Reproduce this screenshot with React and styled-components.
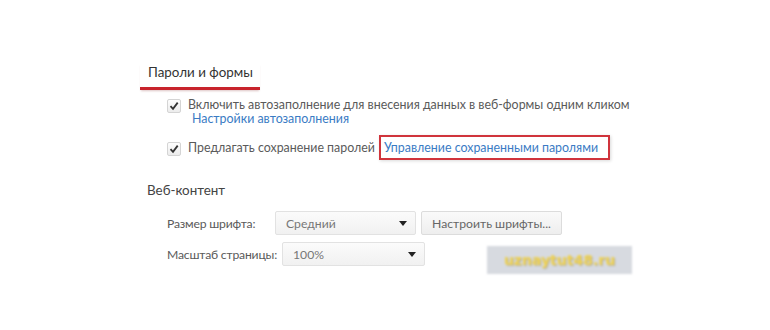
import React from 'react'
import styled, { createGlobalStyle } from 'styled-components'

const GlobalStyle = createGlobalStyle`
  html, body {
    margin: 0;
    background: #fff;
  }
  body {
    font-family: Lato, "Open Sans", "Liberation Sans", sans-serif;
    color: #5a5a5a;
  }
`

const Page = styled.div`
  width: 770px;
  height: 330px;
  box-sizing: border-box;
  padding: 61px 0 0 140px;
  position: relative;
  overflow: hidden;
  white-space: nowrap;
`

const Heading = styled.h3`
  display: inline-block;
  margin: 0;
  padding: 0 7px 6px 8px;
  font-size: 13.4px;
  line-height: 18px;
  font-weight: 400;
  color: #333;
  border-bottom: 3px solid #c8232c;
  box-shadow: 0 2px 2px -1px rgba(120, 20, 20, 0.25);
`

const Options = styled.div`
  margin: 8px 0 0 27px;
  display: flex;
  flex-direction: column;
  gap: 15px;
`

const Option = styled.div`
  display: flex;
  align-items: flex-start;
  gap: 7px;
  font-size: 12.4px;
  line-height: 14px;
`

const Box = styled.span`
  flex: none;
  width: 12px;
  height: 12px;
  margin-top: 1px;
  border: 1px solid #d4d4d4;
  border-radius: 2px;
  background: linear-gradient(#fdfdfd, #ececec);
  display: flex;
  align-items: center;
  justify-content: center;
`

const Link = styled.span`
  color: #3a7bc4;
  display: ${({ $block }) => ($block ? 'block' : 'inline')};
  margin-left: ${({ $block }) => ($block ? '4px' : '0')};
`

const Framed = styled.span`
  margin-left: 4px;
  padding: 3px 10px 3px 3px;
  border: 2px solid #d0343c;
  box-shadow: 1px 1px 3px rgba(0, 0, 0, 0.15);
`

const SubHeading = styled.div`
  margin: 26px 0 0 7px;
  font-size: 13.4px;
  color: #444;
`

const Rows = styled.div`
  margin: 13px 0 0 27px;
  display: flex;
  flex-direction: column;
  gap: 7px;
  font-size: 12.2px;
`

const Row = styled.div`
  display: flex;
  align-items: center;
`

const Label = styled.span`
  width: ${({ $w }) => $w}px;
  flex: none;
  letter-spacing: -0.2px;
`

const Select = styled.div`
  box-sizing: border-box;
  width: ${({ $w }) => $w}px;
  height: 24px;
  padding: 0 8px 0 10px;
  border: 1px solid #e2e2e2;
  border-radius: 2px;
  background: linear-gradient(#fbfbfb, #f1f1f1);
  display: flex;
  align-items: center;
  justify-content: space-between;
  color: #777;
`

const Arrow = styled.span`
  width: 0;
  height: 0;
  border-left: 4px solid transparent;
  border-right: 4px solid transparent;
  border-top: 5px solid #222;
`

const Button = styled.div`
  margin-left: 5px;
  box-sizing: border-box;
  width: 141px;
  height: 24px;
  border: 1px solid #dcdcdc;
  border-radius: 2px;
  background: linear-gradient(#fafafa, #eeeeee);
  display: flex;
  align-items: center;
  justify-content: center;
  color: #666;
`

const Watermark = styled.div`
  position: absolute;
  left: 487px;
  top: 246px;
  width: 145px;
  height: 28px;
  background: #d7dae0;
  display: flex;
  align-items: center;
  justify-content: center;
  font-family: "DejaVu Sans", sans-serif;
  font-weight: 700;
  font-size: 14px;
  color: #efd253;
  text-shadow: 1px 1px 1px rgba(120, 100, 40, 0.35);
  filter: blur(0.8px);
`

function Check () {
  return (
    <Box>
      <svg width='10' height='10' viewBox='0 0 10 10'>
        <path d='M1.5 5.2 L4 7.8 L8.7 1.6' fill='none' stroke='#333' strokeWidth='1.8' />
      </svg>
    </Box>
  )
}

export default function App () {
  return (
    <Page>
      <GlobalStyle />
      <Heading>Пароли и формы</Heading>
      <Options>
        <Option>
          <Check />
          <div>
            Включить автозаполнение для внесения данных в веб-формы одним кликом
            <Link $block>Настройки автозаполнения</Link>
          </div>
        </Option>
        <Option>
          <Check />
          <div>
            Предлагать сохранение паролей
            <Framed><Link>Управление сохраненными паролями</Link></Framed>
          </div>
        </Option>
      </Options>
      <SubHeading>Веб-контент</SubHeading>
      <Rows>
        <Row>
          <Label $w={108}>Размер шрифта:</Label>
          <Select $w={141}>Средний<Arrow /></Select>
          <Button>Настроить шрифты...</Button>
        </Row>
        <Row>
          <Label $w={115}>Масштаб страницы:</Label>
          <Select $w={143}>100%<Arrow /></Select>
        </Row>
      </Rows>
      <Watermark>uznaytut48.ru</Watermark>
    </Page>
  )
}
